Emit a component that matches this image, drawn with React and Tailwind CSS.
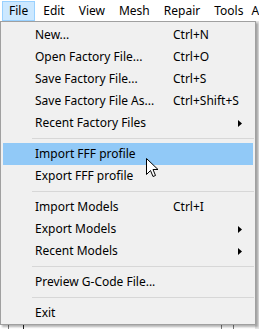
import React from "react";

const Arrow = () => (
  <svg width="4" height="7" viewBox="0 0 4 7" className="block">
    <path d="M0 0 L4 3.5 L0 7 Z" fill="#000" />
  </svg>
);

function Item({ label, shortcut, sub, active }) {
  return (
    <div
      className={`flex items-center h-[22px] mx-[2px] ${
        active ? "bg-[#91c9f7]" : ""
      }`}
    >
      <span className="w-[170px] pl-[32px] shrink-0 whitespace-nowrap">{label}</span>
      <span className="flex-1 whitespace-nowrap">{shortcut}</span>
      {sub && (
        <span className="w-[15px] flex items-center">
          <Arrow />
        </span>
      )}
    </div>
  );
}

const Sep = () => (
  <div className="h-[9px] flex items-center pl-[31px] pr-[1px]">
    <div className="h-px w-full bg-[#d7d7d7]" />
  </div>
);

export default function App() {
  return (
    <div
      className="relative w-[259px] h-[329px] overflow-hidden bg-[#f0f0f0] text-[12px] text-black"
      style={{ fontFamily: '"Noto Sans", "Open Sans", sans-serif' }}
    >
      <div className="h-[21px] bg-white flex items-center whitespace-nowrap">
        <div className="ml-[2px] h-[20px] px-[6px] flex items-center bg-[#cce8ff] border border-[#99d1ff]">
          File
        </div>
        <span className="ml-[8px]">Edit</span>
        <span className="ml-[14px]">View</span>
        <span className="ml-[14px]">Mesh</span>
        <span className="ml-[14px]">Repair</span>
        <span className="ml-[14px]">Tools</span>
        <span className="ml-[8px]">A</span>
      </div>
      <div className="absolute left-0 right-0 bottom-0 h-[6px] bg-white flex">
        <div className="ml-[8px] w-px bg-[#7a7a7a]" />
        <div className="ml-[14px] w-px bg-[#202020]" />
        <div className="ml-[197px] w-px bg-[#7a7a7a]" />
        <div className="ml-[11px] w-px bg-[#7a7a7a]" />
      </div>
      <div className="absolute right-0 top-[21px] bottom-0 w-[4px] bg-[#e6e6e6]" />

      <div className="absolute left-0 top-[21px] w-[256px] h-[304px] bg-[#f0f0f0] border border-[#a0a0a0] pt-[2px] shadow-[2px_2px_2px_rgba(0,0,0,0.3)]">
        <Item label="New..." shortcut="Ctrl+N" />
        <Item label="Open Factory File..." shortcut="Ctrl+O" />
        <Item label="Save Factory File..." shortcut="Ctrl+S" />
        <Item label="Save Factory File As..." shortcut="Ctrl+Shift+S" />
        <Item label="Recent Factory Files" sub />
        <Sep />
        <Item label="Import FFF profile" active />
        <Item label="Export FFF profile" />
        <Sep />
        <Item label="Import Models" shortcut="Ctrl+I" />
        <Item label="Export Models" sub />
        <Item label="Recent Models" sub />
        <Sep />
        <Item label="Preview G-Code File..." />
        <Sep />
        <Item label="Exit" />
      </div>

      <svg
        className="absolute left-[146px] top-[158px]"
        width="13"
        height="20"
        viewBox="0 0 13 20"
      >
        <path
          d="M0.5 0.5 L0.5 16.5 L4.5 12.5 L7 18.5 L9.5 17.5 L7 11.5 L12 11.5 Z"
          fill="#fff"
          stroke="#000"
          strokeWidth="1"
          strokeLinejoin="miter"
        />
      </svg>
    </div>
  );
}
